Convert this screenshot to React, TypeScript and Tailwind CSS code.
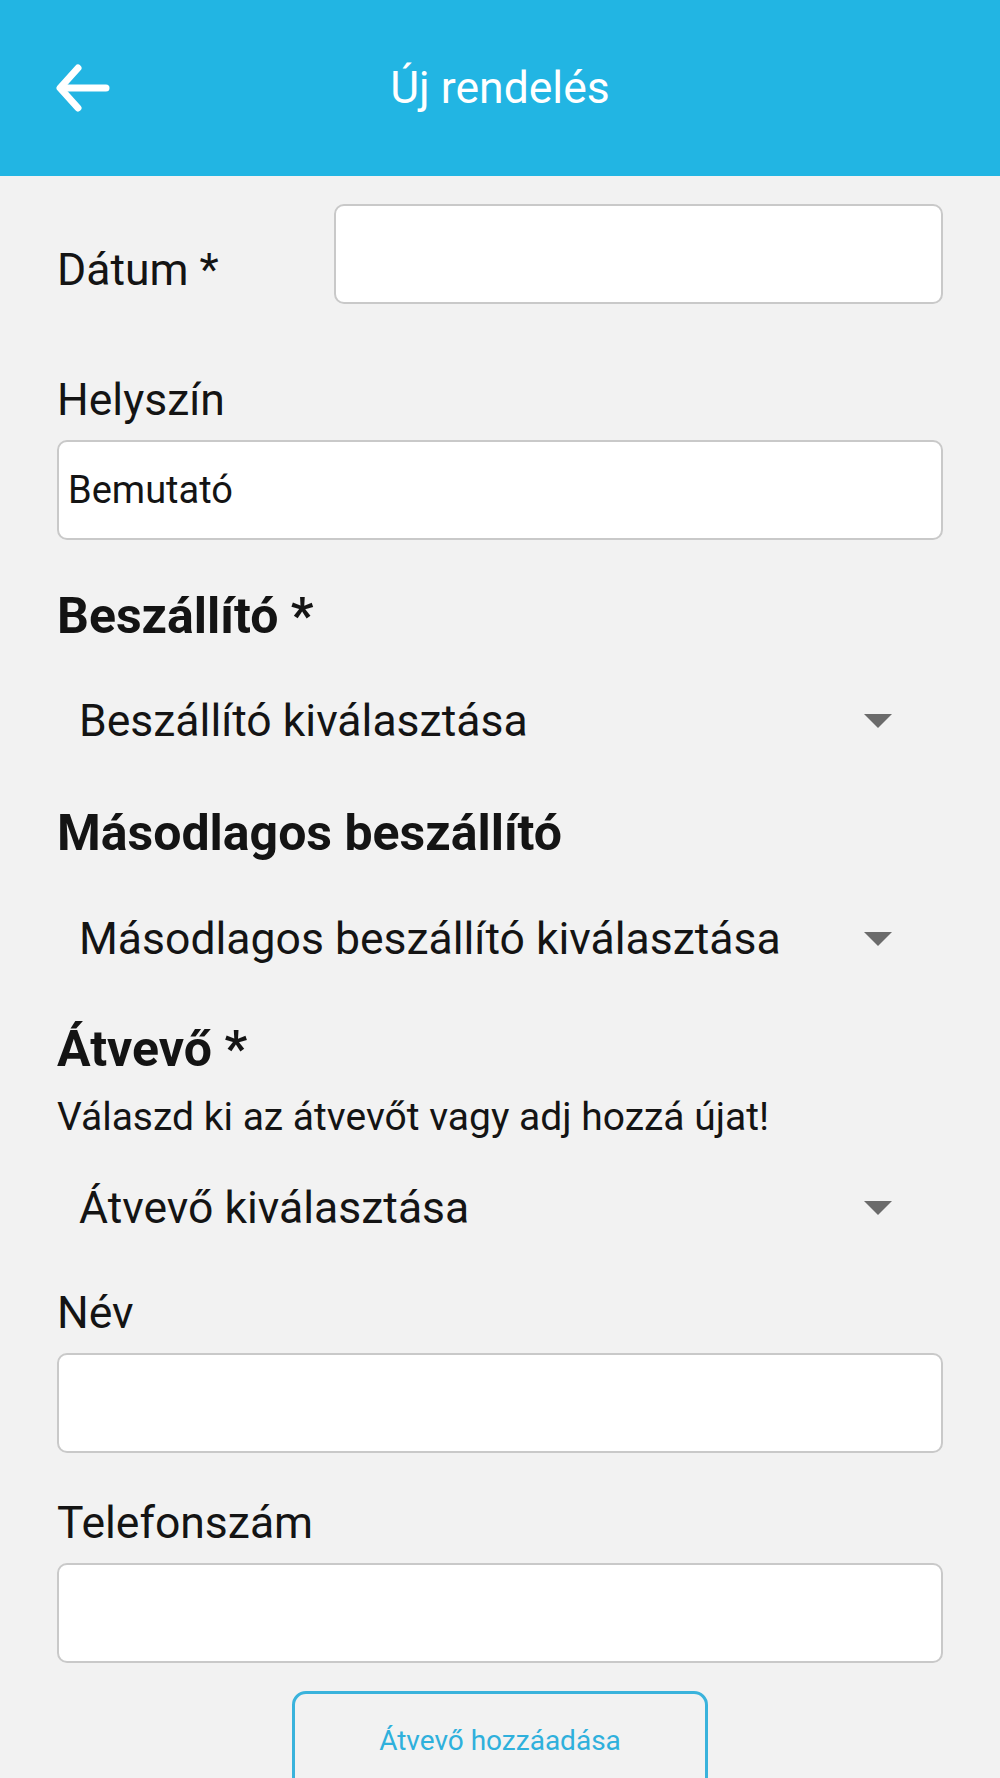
import React from 'react'

const font = { fontFamily: 'Roboto, "Noto Sans", Arial, sans-serif' }

function BackArrow() {
  return (
    <svg width="54" height="50" viewBox="0 0 54 50" fill="none" stroke="white" strokeWidth="7" strokeLinecap="round" strokeLinejoin="round">
      <path d="M50 25H5" />
      <path d="M22 5L4 25L22 45" />
    </svg>
  )
}

function TextInput({ value }: { value?: string }) {
  return (
    <div className="flex h-[100px] w-full items-center rounded-[10px] border-2 border-[#c9c9c9] bg-white pl-[9px] text-[38px] text-[#141414]">
      {value}
    </div>
  )
}

function Select({ placeholder, className }: { placeholder: string; className: string }) {
  return (
    <div className={`flex h-[80px] items-center justify-between pl-[22px] pr-[51px] ${className}`}>
      <span className="text-[44.5px] leading-[52px] text-[#141414]">{placeholder}</span>
      <svg width="28" height="14" viewBox="0 0 28 14">
        <path d="M0 0H28L14 14Z" fill="#6b6b6b" />
      </svg>
    </div>
  )
}

export default function App() {
  return (
    <div className="h-[1778px] w-[1000px] overflow-hidden bg-[#f2f2f2]" style={font}>
      <header className="relative flex h-[176px] items-center bg-[#22b5e3] px-[56px]">
        <BackArrow />
        <h1 className="absolute left-0 right-0 text-center text-[44.5px] font-normal leading-[52px] text-white">Új rendelés</h1>
      </header>

      <main className="flex flex-col px-[57px] text-[#141414]">
        <div className="mt-[28px] flex items-start">
          <label className="mt-[40px] w-[277px] shrink-0 text-[44.5px] leading-[52px]">Dátum *</label>
          <TextInput />
        </div>

        <label className="mt-[70px] text-[44.5px] leading-[52px]">Helyszín</label>
        <div className="mt-[14px]">
          <TextInput value="Bemutató" />
        </div>

        <h2 className="mt-[46px] text-[50px] font-bold leading-[60px]">Beszállító *</h2>
        <Select placeholder="Beszállító kiválasztása" className="mt-[35px]" />

        <h2 className="mt-[42px] text-[50px] font-bold leading-[60px]">Másodlagos beszállító</h2>
        <Select placeholder="Másodlagos beszállító kiválasztása" className="mt-[36px]" />

        <h2 className="mt-[40px] text-[50px] font-bold leading-[60px]">Átvevő *</h2>
        <p className="mt-[15px] text-[39px] leading-[46px]">Válaszd ki az átvevőt vagy adj hozzá újat!</p>
        <Select placeholder="Átvevő kiválasztása" className="mt-[28px]" />

        <label className="mt-[39px] text-[44.5px] leading-[52px]">Név</label>
        <div className="mt-[14px]">
          <TextInput />
        </div>

        <label className="mt-[44px] text-[44.5px] leading-[52px]">Telefonszám</label>
        <div className="mt-[14px]">
          <TextInput />
        </div>

        <div className="mt-[28px] flex justify-center">
          <button className="h-[100px] w-[416px] rounded-[14px] border-[3px] border-[#3ab3dc] text-[28px] text-[#2fb0dc]">
            Átvevő hozzáadása
          </button>
        </div>
      </main>
    </div>
  )
}
